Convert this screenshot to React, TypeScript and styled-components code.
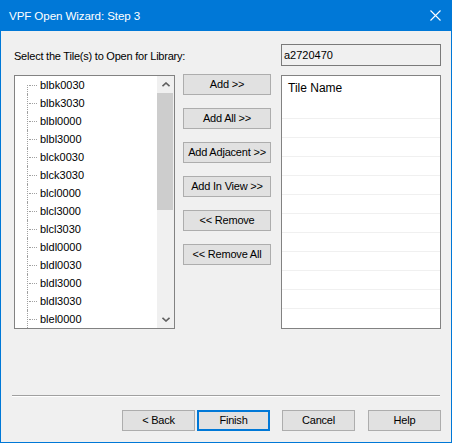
import * as React from 'react'
import styled, { createGlobalStyle, css } from 'styled-components'

const GlobalStyle = createGlobalStyle`
  html, body {
    margin: 0;
    padding: 0;
    background: #f0f0f0;
  }
  * {
    box-sizing: border-box;
  }
`

const Window = styled.div`
  width: 452px;
  height: 443px;
  display: flex;
  flex-direction: column;
  background: #f0f0f0;
  border: 1px solid #0078d7;
  border-top: none;
  font-family: 'Liberation Sans', Arial, sans-serif;
  font-size: 11px;
  color: #000;
`

const TitleBar = styled.header`
  height: 31px;
  flex: none;
  display: flex;
  align-items: center;
  justify-content: space-between;
  background: #0078d7;
  color: #fff;
  padding: 0 9px 1px 8px;
`

const Title = styled.span`
  font-size: 11.6px;
  letter-spacing: -0.1px;
`

const CloseGlyph = styled.svg`
  width: 11px;
  height: 11px;
  margin-right: 1px;
`

const Body = styled.main`
  flex: 1;
  display: flex;
  flex-direction: column;
  padding: 13px 10px 0 13px;
`

const TopRow = styled.div`
  height: 22px;
  display: flex;
  align-items: center;
  justify-content: space-between;
`

const Label = styled.span`
  letter-spacing: -0.22px;
  padding-top: 1px;
`

const LibraryBox = styled.div`
  width: 160px;
  height: 22px;
  display: flex;
  align-items: center;
  padding: 0 0 1px 2px;
  border: 1px solid #7a7a7a;
  background: #f0f0f0;
`

const MainRow = styled.div`
  margin-top: 9px;
  height: 254px;
  display: flex;
  align-items: flex-start;
`

const ListFrame = styled.div<{ $width: number }>`
  width: ${(p) => p.$width}px;
  height: 254px;
  flex: none;
  display: flex;
  border: 1px solid #828282;
  background: #fff;
  overflow: hidden;
`

const TreeItems = styled.ul`
  flex: 1;
  margin: 0;
  padding: 0;
  list-style: none;
`

const TreeItem = styled.li<{ $first?: boolean }>`
  position: relative;
  height: 18px;
  line-height: 18px;
  padding-left: 25px;

  &::before {
    content: '';
    position: absolute;
    left: 12px;
    top: ${(p) => (p.$first ? '9px' : '0')};
    bottom: 0;
    border-left: 1px dotted #a0a0a0;
  }

  &::after {
    content: '';
    position: absolute;
    left: 14px;
    width: 8px;
    top: 9px;
    border-top: 1px dotted #a0a0a0;
  }
`

const ScrollBar = styled.div`
  width: 17px;
  flex: none;
  display: flex;
  flex-direction: column;
  background: #f0f0f0;
`

const ScrollArrow = styled.div`
  height: 17px;
  display: flex;
  align-items: center;
  justify-content: center;
`

const ScrollTrack = styled.div`
  flex: 1;
  display: flex;
  flex-direction: column;
`

const ScrollThumb = styled.div`
  height: 117px;
  margin: 0 1px 0 0;
  background: #cdcdcd;
`

const ButtonColumn = styled.div`
  width: 88px;
  margin: -1px 10px 0 8px;
  display: flex;
  flex-direction: column;
  gap: 13px;
`

const WinButton = styled.button<{ $default?: boolean; $width?: number }>`
  height: 21px;
  width: ${(p) => (p.$width ? `${p.$width}px` : '100%')};
  padding: 0 0 1px;
  margin: 0;
  background: #e1e1e1;
  border: 1px solid #adadad;
  font-family: 'Liberation Sans', Arial, sans-serif;
  font-size: 11px;
  color: #000;
  letter-spacing: -0.2px;
  ${(p) =>
    p.$default &&
    css`
      border: 2px solid #0078d7;
    `}
`

const TileHeader = styled.div`
  height: 42px;
  flex: none;
  padding: 5px 0 0 6px;
  font-size: 12px;
  line-height: 14px;
`

const TileRow = styled.div`
  height: 19px;
  flex: none;
  border-top: 1px solid #f0f0f0;
`

const TileColumn = styled.div`
  flex: 1;
  display: flex;
  flex-direction: column;
`

const Separator = styled.hr`
  margin: 66px 1px 0 -2px;
  height: 2px;
  border: none;
  border-top: 1px solid #a0a0a0;
  border-bottom: 1px solid #fff;
`

const Footer = styled.footer`
  margin-top: 13px;
  display: flex;
  justify-content: flex-end;
  gap: 0;
`

const FooterSlot = styled.div<{ $gap: number }>`
  margin-left: ${(p) => p.$gap}px;
`

const tiles = [
  'blbk0030',
  'blbk3030',
  'blbl0000',
  'blbl3000',
  'blck0030',
  'blck3030',
  'blcl0000',
  'blcl3000',
  'blcl3030',
  'bldl0000',
  'bldl0030',
  'bldl3000',
  'bldl3030',
  'blel0000',
]

const middleButtons = [
  'Add >>',
  'Add All >>',
  'Add Adjacent >>',
  'Add In View >>',
  '<< Remove',
  '<< Remove All',
]

const footerButtons = [
  { label: '< Back', gap: 0 },
  { label: 'Finish', gap: 2, isDefault: true },
  { label: 'Cancel', gap: 12 },
  { label: 'Help', gap: 13 },
]

const Chevron = ({ down }: { down?: boolean }) => (
  <svg width="8" height="5" viewBox="0 0 8 5">
    <polyline
      points={down ? '0.5,0.8 4,4 7.5,0.8' : '0.5,4.2 4,1 7.5,4.2'}
      fill="none"
      stroke="#606060"
      strokeWidth="1.6"
    />
  </svg>
)

export default function App() {
  return (
    <>
      <GlobalStyle />
      <Window>
        <TitleBar>
          <Title>VPF Open Wizard: Step 3</Title>
          <CloseGlyph viewBox="0 0 11 11">
            <path d="M0.5 0.5 L10.5 10.5 M10.5 0.5 L0.5 10.5" stroke="#fff" strokeWidth="1.1" />
          </CloseGlyph>
        </TitleBar>
        <Body>
          <TopRow>
            <Label>Select the Tile(s) to Open for Library:</Label>
            <LibraryBox>a2720470</LibraryBox>
          </TopRow>
          <MainRow>
            <ListFrame $width={161}>
              <TreeItems>
                {tiles.map((t, i) => (
                  <TreeItem key={t} $first={i === 0}>
                    {t}
                  </TreeItem>
                ))}
              </TreeItems>
              <ScrollBar>
                <ScrollArrow>
                  <Chevron />
                </ScrollArrow>
                <ScrollTrack>
                  <ScrollThumb />
                </ScrollTrack>
                <ScrollArrow>
                  <Chevron down />
                </ScrollArrow>
              </ScrollBar>
            </ListFrame>
            <ButtonColumn>
              {middleButtons.map((b) => (
                <WinButton key={b}>{b}</WinButton>
              ))}
            </ButtonColumn>
            <ListFrame $width={160}>
              <TileColumn>
                <TileHeader>Tile Name</TileHeader>
                {Array.from({ length: 11 }, (_, i) => (
                  <TileRow key={i} />
                ))}
              </TileColumn>
            </ListFrame>
          </MainRow>
          <Separator />
          <Footer>
            {footerButtons.map((b) => (
              <FooterSlot key={b.label} $gap={b.gap}>
                <WinButton $width={73} $default={b.isDefault}>
                  {b.label}
                </WinButton>
              </FooterSlot>
            ))}
          </Footer>
        </Body>
      </Window>
    </>
  )
}
